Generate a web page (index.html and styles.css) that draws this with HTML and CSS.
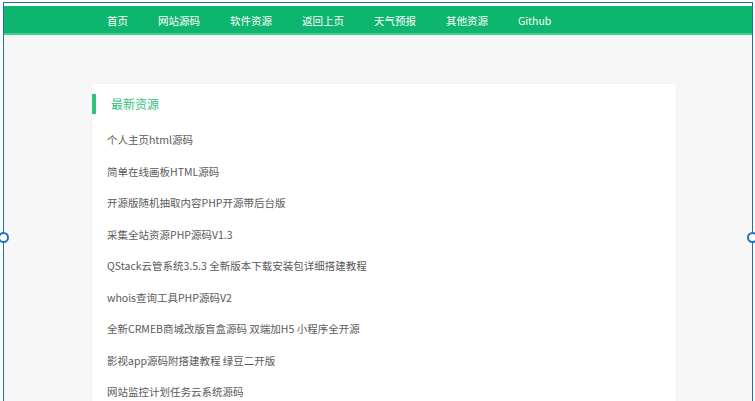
FILE: index.html
```html
<!DOCTYPE html>
<html lang="zh-CN">
<head>
    <meta charset="UTF-8">
    <meta name="viewport" content="width=device-width, initial-scale=1.0">
    <title>最新资源</title>
    <link rel="stylesheet" href="styles.css">
</head>
<body>
    <div class="frame">
        <span class="handle handle-left"></span>
        <span class="handle handle-right"></span>

        <div class="topbar">
            <nav class="nav">
                <a href="#">首页</a><a href="#">网站源码</a><a href="#">软件资源</a><a href="#">返回上页</a><a href="#">天气预报</a><a href="#">其他资源</a><a href="#">Github</a>
            </nav>
        </div>

        <div class="main">
            <div class="box">
                <h2 class="box-title">最新资源</h2>
                <ul class="list">
                    <li>个人主页html源码</li>
                    <li>简单在线画板HTML源码</li>
                    <li>开源版随机抽取内容PHP开源带后台版</li>
                    <li>采集全站资源PHP源码V1.3</li>
                    <li>QStack云管系统3.5.3 全新版本下载安装包详细搭建教程</li>
                    <li>whois查询工具PHP源码V2</li>
                    <li>全新CRMEB商城改版盲盒源码 双端加H5 小程序全开源</li>
                    <li>影视app源码附搭建教程 绿豆二开版</li>
                    <li>网站监控计划任务云系统源码</li>
                </ul>
            </div>
        </div>
    </div>
</body>
</html>
```

FILE: styles.css
```css
html, body {
    margin: 0;
    padding: 0;
    height: 100%;
    overflow: hidden;
    background: #fff;
    font-family: "Noto Sans CJK SC", "Noto Sans", sans-serif;
}
.frame {
    position: relative;
    margin: 2px 0 0 3px;
    width: 748px;
    height: 396px;
    border: 1px solid #1b6fb6;
    border-bottom: none;
    padding-top: 3px;
}
.handle {
    position: absolute;
    top: 229px;
    width: 7px;
    height: 7px;
    border: 2px solid #1b72bd;
    border-radius: 50%;
    background: #fff;
    z-index: 2;
}
.handle-left {
    left: -6px;
}
.handle-right {
    right: -6px;
}
.topbar {
    height: 27px;
    background: #0db56e;
    border-bottom: 2px solid #3fcf8c;
}
.nav {
    margin-left: 88px;
    white-space: nowrap;
}
.nav a {
    display: inline-block;
    padding: 0 15px;
    line-height: 27px;
    font-size: 10.5px;
    color: #fff;
    text-decoration: none;
}
.main {
    background: #f7f7f8;
    padding-top: 49px;
    height: 318px;
    overflow: hidden;
}
.box {
    margin-left: 88px;
    width: 584px;
    height: 400px;
    padding-top: 10px;
    background: #fff;
    box-shadow: 0 0 2px rgba(0, 0, 0, 0.04);
}
.box-title {
    margin: 0;
    border-left: 4px solid #2ec47f;
    padding-left: 15px;
    line-height: 20px;
    font-size: 12px;
    font-weight: normal;
    color: #35c27e;
}
.list {
    list-style: none;
    margin: 10px 0 0;
    padding: 0 15px;
}
.list li {
    line-height: 31.5px;
    font-size: 10.5px;
    color: #5a5a5a;
}
```
